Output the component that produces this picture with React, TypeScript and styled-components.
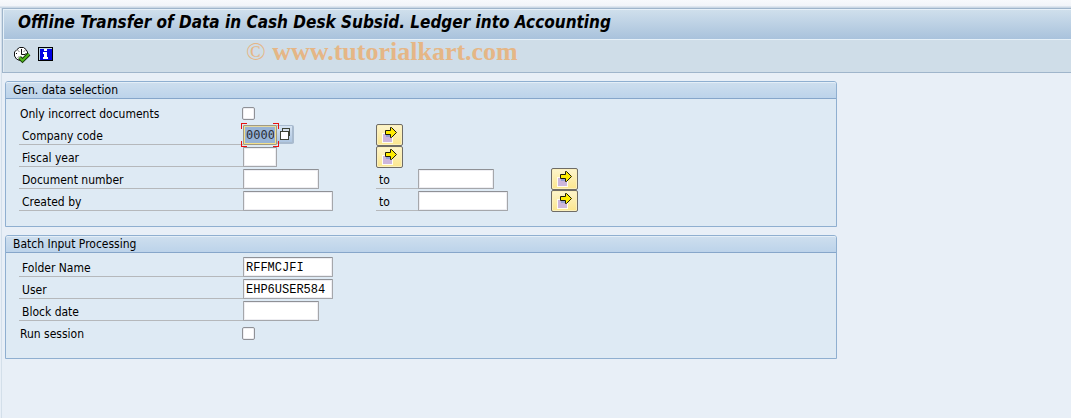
import React from 'react';
import styled, { createGlobalStyle, css } from 'styled-components';

const sans = `"DejaVu Sans Condensed", Tahoma, "Noto Sans", sans-serif`;

const GlobalStyle = createGlobalStyle`
  *, *::before, *::after { box-sizing: border-box; }
  body {
    margin: 0;
    background: #e8eff7;
    color: #000;
    font-family: ${sans};
    font-size: 12px;
  }
`;

const Window = styled.div`
  min-height: calc(100vh - 8px);
  margin-left: 1px;
  border-left: 1px solid #d3dfea;
`;

const Header = styled.header`
  border: solid #9fb5cb;
  border-width: 1px 0 1px 1px;
`;

const TopStrip = styled.div`
  height: 8px;
  background: linear-gradient(#f7f9fc, #f1f4f9 6px, #cbd8e5 7px);
`;

const Title = styled.h1`
  margin: 0;
  height: 31px;
  padding: 0 14px;
  border: solid #e6f0f8;
  border-width: 1px 0 1px 1px;
  background: linear-gradient(#cfdfec, #a9c2dc);
  font: italic bold 17px/24px ${sans};
  white-space: nowrap;
`;

const Toolbar = styled.div`
  display: flex;
  align-items: flex-start;
  height: 32px;
  padding: 7px 10px 0;
  border-left: 1px solid #e0eaf2;
  background: #cfdde8;
`;

const ToolButton = styled.button`
  display: flex;
  width: 16px;
  height: 16px;
  margin-right: 8px;
  padding: 0;
  border: 0;
  background: none;
  svg { overflow: visible; flex: none; }
`;

const Watermark = styled.span`
  margin: -7px 0 0 184px;
  color: #e5b686;
  font: bold 26px/24px "Liberation Serif", "Times New Roman", serif;
  white-space: nowrap;
`;

const Copyright = styled.span`
  font-weight: normal;
`;

const Content = styled.main`
  display: flex;
  flex-direction: column;
  gap: 8px;
  max-width: 835px;
  padding: 8px 0 0 3px;
`;

const Panel = styled.section`
  padding-bottom: 14px;
  border: 1px solid #8fafd0;
  border-radius: 3px 3px 0 0;
  background: #deeaf4;
`;

const PanelTitle = styled.h2`
  margin: 0 0 3px;
  height: 17px;
  padding-left: 7px;
  border-top: 1px solid #e4eef7;
  border-bottom: 1px solid #86a6ca;
  border-radius: 2px 2px 0 0;
  background: linear-gradient(#cddeee, #bcd3ea);
  font-size: 12px;
  font-weight: normal;
  line-height: 14px;
`;

const Row = styled.div`
  display: grid;
  grid-template-columns: 224px 133px 42px 133px 27px;
  height: 22px;
  padding-left: 13px;
`;

const Label = styled.label<{ $plain?: boolean }>`
  height: 21px;
  padding-left: ${p => (p.$plain ? 1 : 3)}px;
  border-bottom: 1px solid ${p => (p.$plain ? 'transparent' : '#b5b8bb')};
  line-height: 24px;
  white-space: nowrap;
`;

const Field = styled.div`
  display: flex;
  align-items: flex-start;
`;

const inputFace = css`
  border: 1px solid #a5a7ab;
  border-top-color: #8f9196;
  border-radius: 1px;
  background: #fff;
  box-shadow: inset 0 0 0 1px #eeeef2;
`;

const TextBox = styled.input<{ $width: number }>`
  ${inputFace}
  width: ${p => p.$width}px;
  height: 20px;
  margin: 1px 0 0;
  padding: 1px 2px 0;
  font: 12px/17px "Liberation Mono", "Courier New", monospace;
  outline: none;
`;

const CheckBox = styled.input.attrs({ type: 'checkbox' })`
  ${inputFace}
  appearance: none;
  width: 13px;
  height: 13px;
  margin: 5px 0 0 -1px;
  border-color: #8f9196;
  border-radius: 2px;
`;

const FocusFrame = styled.div`
  position: relative;
  display: flex;
  svg {
    position: absolute;
    top: -1px;
    left: -2px;
    pointer-events: none;
  }
`;

const FocusedBox = styled(TextBox)`
  border: 2px solid #f3e08c;
  border-top-color: #e5d9a0;
  outline: 1px solid #a09a82;
  outline-offset: -1px;
  background: #97b3d6;
  box-shadow: none;
  color: #2c3038;
  padding: 0 1px;
  font-family: "DejaVu Sans Mono", monospace;
  line-height: 16px;
`;

const HelpButton = styled.button`
  display: flex;
  width: 17px;
  height: 19px;
  margin-top: 1px;
  padding: 2px 0 0 2px;
  border: solid #a9bbcf;
  border-width: 1px 2px 2px 0;
  border-radius: 0 2px 2px 0;
  background: linear-gradient(#d6e4f3, #aec5e0);
  svg { flex: none; }
`;

const ArrowButton = styled.button`
  display: flex;
  width: 27px;
  height: 22px;
  padding: 2px 0 0 5px;
  border: 1px solid #6f6c66;
  border-radius: 2px;
  background: linear-gradient(#fdf5cd, #fbe68d);
  box-shadow: inset 0 0 0 1px #fbf0bc;
  svg { flex: none; }
`;

const ClockIcon = () => (
  <svg width="17" height="16" viewBox="0 0 17 16" aria-hidden="true">
    <path d="M5.5 .5h4L12 2.5l1.5 2.5v4L11 12.5 8.5 13.5h-3L2.5 12 .5 9v-4L3 2.5z" fill="#fff" stroke="#111" />
    <path d="M7.500 2v5.500h4M2 6.500h1M11.500 6.500h1M4 10.500l1-1M4 3.500l1 1M11 3.500l-1 1" fill="none" stroke="#111" />
    <path d="M5.500 10.500 8.500 13.500 15 7" fill="none" stroke="#16380a" strokeWidth="4" />
    <path d="M5.500 10.500 8.500 13.500 15 7" fill="none" stroke="#50b81c" strokeWidth="2" />
  </svg>
);

const InfoIcon = () => (
  <svg width="15" height="14" viewBox="0 0 15 14" shapeRendering="crispEdges" aria-hidden="true">
    <path d="M0 0h15v14H0z" fill="#000" />
    <path d="M1 1h13v12H1z" fill="#b9d3e3" />
    <path d="M2 2h12v11H2z" fill="#0000e4" />
    <path d="M6 2h3v2H6zM5 5h4v5h1v2H5v-2h1V7H5z" fill="#fff" />
  </svg>
);

const ArrowIcon = () => (
  <svg width="16" height="16" viewBox="0 0 16 16" aria-hidden="true">
    <path d="M0 6h11v10H0z" fill="#fffdf0" />
    <path d="M1 7h9v8H1z" fill="#cdb6dc" />
    <path d="M4 7h6v3H4z" fill="#94a0d4" />
    <path d="M3.500 3.500h5v-3h1l5 5-5 5h-1v-3h-5z" fill="#ffec00" stroke="#1c1a08" />
  </svg>
);

const HelpIcon = () => (
  <svg width="12" height="12" viewBox="0 0 12 12" shapeRendering="crispEdges" aria-hidden="true">
    <path d="M3.500 0.500h7v7h-7z" fill="#d5dfe9" stroke="#3d4236" />
    <path d="M1 3h8v8H1z" fill="#fff" stroke="#3d4236" />
  </svg>
);

const FocusCorners = () => (
  <svg width="38" height="24" viewBox="0 0 38 24" shapeRendering="crispEdges" aria-hidden="true">
    <path d="M.5 6V.5H6M32 .5h5.5V6M37.5 18v5.5H32M6 23.5H.5V18" fill="none" stroke="#e81010" />
  </svg>
);

const SelectionButton = ({ name }: { name: string }) => (
  <ArrowButton type="button" aria-label={`Multiple selection for ${name}`}>
    <ArrowIcon />
  </ArrowButton>
);

const CheckRow = ({ id, label }: { id: string; label: string }) => (
  <Row>
    <Label $plain htmlFor={id}>{label}</Label>
    <Field><CheckBox id={id} /></Field>
  </Row>
);

interface TextRowProps {
  id: string;
  label: string;
  width: number;
  value?: string;
  range?: boolean;
}

const TextRow = ({ id, label, width, value, range }: TextRowProps) => (
  <Row>
    <Label htmlFor={id}>{label}</Label>
    <Field><TextBox id={id} $width={width} defaultValue={value} /></Field>
    {range && (
      <>
        <Label htmlFor={`${id}-to`}>to</Label>
        <Field><TextBox id={`${id}-to`} $width={width} /></Field>
        <SelectionButton name={label} />
      </>
    )}
  </Row>
);

export default function App() {
  return (
    <>
      <GlobalStyle />
      <TopStrip />
      <Window>
        <Header>
          <Title>Offline Transfer of Data in Cash Desk Subsid. Ledger into Accounting</Title>
          <Toolbar>
            <ToolButton type="button" aria-label="Execute"><ClockIcon /></ToolButton>
            <ToolButton type="button" aria-label="Information"><InfoIcon /></ToolButton>
            <Watermark><Copyright>©</Copyright> www.tutorialkart.com</Watermark>
          </Toolbar>
        </Header>
        <Content>
          <Panel>
            <PanelTitle>Gen. data selection</PanelTitle>
            <CheckRow id="incorrect" label="Only incorrect documents" />
            <Row>
              <Label htmlFor="company">Company code</Label>
              <Field>
                <FocusFrame>
                  <FocusedBox id="company" $width={34} defaultValue="0000" />
                  <FocusCorners />
                </FocusFrame>
                <HelpButton type="button" aria-label="Company code values"><HelpIcon /></HelpButton>
              </Field>
              <SelectionButton name="Company code" />
            </Row>
            <Row>
              <Label htmlFor="year">Fiscal year</Label>
              <Field><TextBox id="year" $width={34} /></Field>
              <SelectionButton name="Fiscal year" />
            </Row>
            <TextRow id="document" label="Document number" width={76} range />
            <TextRow id="creator" label="Created by" width={90} range />
          </Panel>
          <Panel>
            <PanelTitle>Batch Input Processing</PanelTitle>
            <TextRow id="folder" label="Folder Name" width={90} value="RFFMCJFI" />
            <TextRow id="user" label="User" width={90} value="EHP6USER584" />
            <TextRow id="block" label="Block date" width={76} />
            <CheckRow id="run" label="Run session" />
          </Panel>
        </Content>
      </Window>
    </>
  );
}
